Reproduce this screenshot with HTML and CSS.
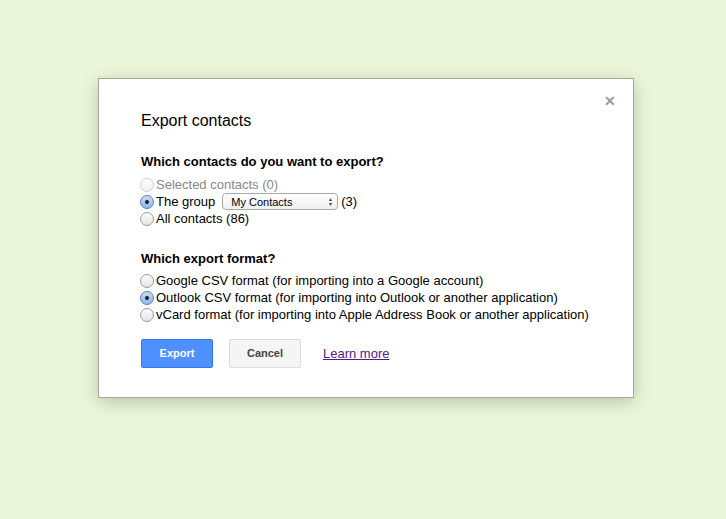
FILE: index.html
```
<html>
<head>
    <meta charset="utf-8">
    <link rel="stylesheet" href="styles.css">
</head>
<body>
    <div class="dialog">
        <span class="close">&#x2715;</span>
        <div class="title">Export contacts</div>
        <div class="heading">Which contacts do you want to export?</div>
        <label class="row disabled"><input type="radio" name="who" disabled>Selected contacts (0)</label>
        <label class="row"><input type="radio" name="who" checked>The group
            <span class="select">My Contacts<span class="arrows">&#x25B4;<br>&#x25BE;</span></span>(3)</label>
        <label class="row"><input type="radio" name="who">All contacts (86)</label>

        <div class="heading second">Which export format?</div>
        <label class="row"><input type="radio" name="fmt">Google CSV format (for importing into a Google account)</label>
        <label class="row"><input type="radio" name="fmt" checked>Outlook CSV format (for importing into Outlook or another application)</label>
        <label class="row"><input type="radio" name="fmt">vCard format (for importing into Apple Address Book or another application)</label>

        <div class="buttons">
            <button class="button primary">Export</button>
            <button class="button">Cancel</button>
            <a href="#" class="link">Learn more</a>
        </div>
    </div>
</body>
</html>
```

FILE: styles.css
```
body{
    margin: 0;
    background: #eaf5d9;
    font-family: "Liberation Sans", Arial, sans-serif;
    font-size: 13px;
    color: #000;
}

.dialog{
    position: relative;
    box-sizing: border-box;
    width: 536px;
    height: 320px;
    margin: 78px 0 0 98px;
    padding: 32px 0 0 42px;
    background: #fff;
    border: 1px solid #a3a994;
    box-shadow: 0 4px 16px rgb(0 0 0 / 20%);
}

.close{
    position: absolute;
    top: 14px;
    right: 17px;
    color: #999;
    font-size: 14px;
    font-weight: bold;
    line-height: 16px;
}

.title{
    font-size: 16px;
    line-height: 20px;
    margin-bottom: 22px;
}

.heading{
    font-weight: bold;
    line-height: 17px;
    margin-bottom: 6px;
}

.heading.second{
    margin-top: 23px;
    margin-bottom: 5px;
}

.row{
    display: flex;
    align-items: center;
    height: 17px;
    white-space: nowrap;
}

.row.disabled{
    color: #888;
}

.row input{
    appearance: none;
    -webkit-appearance: none;
    box-sizing: border-box;
    width: 14px;
    height: 14px;
    margin: 0 2px 0 -1px;
    border-radius: 50%;
    border: 1px solid #9a9a9a;
    background: linear-gradient(#fdfdfd, #e4e4e4);
    position: relative;
}

.row input:disabled{
    border-color: #cfcfcf;
    background: linear-gradient(#fff, #f1f1f1);
}

.row input:checked{
    border-color: #5c7fb0;
    background: linear-gradient(#c7dcf5, #8fb6ea);
}

.row input:checked::after{
    content: "";
    position: absolute;
    left: 4px;
    top: 4px;
    width: 4px;
    height: 4px;
    border-radius: 50%;
    background: #1a1a1a;
}

.select{
    display: inline-flex;
    align-items: center;
    justify-content: space-between;
    box-sizing: border-box;
    width: 116px;
    height: 17px;
    margin: 0 3px 0 7px;
    padding: 0 5px 0 8px;
    border: 1px solid #a9a9a9;
    border-radius: 4px;
    background: linear-gradient(#fff, #f0f0f0);
    font-size: 11px;
}

.arrows{
    font-size: 6px;
    line-height: 5px;
    color: #444;
    text-align: center;
}

.buttons{
    display: flex;
    align-items: center;
    margin-top: 15.5px;
}

.button{
    box-sizing: border-box;
    width: 72px;
    height: 29px;
    margin-right: 16px;
    border: 1px solid #dcdcdc;
    border-radius: 2px;
    background: #f5f5f5;
    color: #444;
    font-family: "Liberation Sans", Arial, sans-serif;
    font-size: 11px;
    font-weight: bold;
}

.button.primary{
    background: #4d90fe;
    border-color: #3079ed;
    color: #fff;
}

.link{
    margin-left: 6px;
    color: #551a8b;
    text-decoration: underline;
}
```
